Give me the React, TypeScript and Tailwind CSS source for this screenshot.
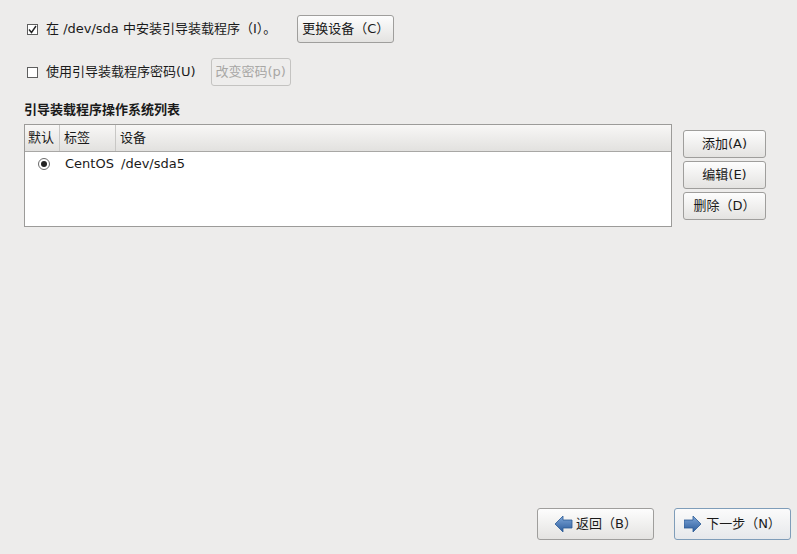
import React from "react";

const font = {
  fontFamily: '"DejaVu Sans", "Noto Sans CJK SC", sans-serif',
};

function GtkButton({
  children,
  className = "",
  disabled = false,
  focused = false,
}: {
  children: React.ReactNode;
  className?: string;
  disabled?: boolean;
  focused?: boolean;
}) {
  return (
    <button
      type="button"
      disabled={disabled}
      className={`flex items-center justify-center rounded-[3px] border text-[13px] ${
        disabled
          ? "border-[#c4c3c1] bg-[#eeedec] text-[#a8a7a5]"
          : focused
          ? "border-[#7f9db9] bg-gradient-to-b from-[#fbfbfb] to-[#e6e8eb] text-[#1a1a1a]"
          : "border-[#9f9e9c] bg-gradient-to-b from-[#fdfdfd] to-[#e4e3e1] text-[#1a1a1a]"
      } ${className}`}
    >
      {children}
    </button>
  );
}

function Check({ checked }: { checked: boolean }) {
  return (
    <span className="flex h-[11px] w-[11px] items-center justify-center border border-[#5e5e5e] bg-white">
      {checked && (
        <svg width="9" height="9" viewBox="0 0 9 9">
          <path d="M1 4.5 L3.5 7.5 L8 1" fill="none" stroke="#222" strokeWidth="1.4" />
        </svg>
      )}
    </span>
  );
}

function Arrow({ dir }: { dir: "left" | "right" }) {
  const id = `g-${dir}`;
  const pts =
    dir === "left"
      ? "1,9 9,1 9,5 18,5 18,13 9,13 9,17"
      : "17,9 9,1 9,5 0,5 0,13 9,13 9,17";
  return (
    <svg width="19" height="18" viewBox="0 0 19 18">
      <defs>
        <linearGradient id={id} x1="0" y1="0" x2="0" y2="1">
          <stop offset="0" stopColor="#7fa7d9" />
          <stop offset="1" stopColor="#2c5c9c" />
        </linearGradient>
      </defs>
      <polygon points={pts} fill={`url(#${id})`} stroke="#2b5a96" strokeWidth="0.8" />
    </svg>
  );
}

export default function App() {
  return (
    <div
      style={font}
      className="flex h-[554px] w-[797px] flex-col bg-[#edeceb] text-[13px] text-[#1a1a1a]"
    >
      <div className="mt-[15px] flex h-[28px] items-center pl-[27px]">
        <Check checked />
        <span className="ml-[8px]">在 /dev/sda 中安装引导装载程序（I）。</span>
        <GtkButton className="ml-[21px] h-[28px] w-[97px]">更换设备（C）</GtkButton>
      </div>

      <div className="mt-[15px] flex h-[28px] items-center pl-[27px]">
        <Check checked={false} />
        <span className="ml-[8px]">使用引导装载程序密码(U)</span>
        <GtkButton disabled className="ml-[15px] h-[28px] w-[80px]">
          改变密码(p)
        </GtkButton>
      </div>

      <div className="ml-[24px] mt-[15px] text-[13px] font-bold leading-[18px]">
        引导装载程序操作系统列表
      </div>

      <div className="mt-[5px] flex">
        <div className="ml-[24px] h-[103px] w-[648px] border border-[#9c9b99] bg-white">
          <div className="flex h-[27px] items-center border-b border-[#a8a7a5] bg-gradient-to-b from-[#f8f7f6] to-[#e2e1df]">
            <div className="flex h-full w-[35px] items-center border-r border-[#c8c7c5] pl-[3px]">
              默认
            </div>
            <div className="flex h-full w-[56px] items-center border-r border-[#c8c7c5] pl-[4px]">
              标签
            </div>
            <div className="flex h-full items-center pl-[4px]">设备</div>
          </div>
          <div className="flex h-[24px] items-center">
            <div className="flex w-[35px] justify-center pl-[2px]">
              <span className="flex h-[12px] w-[12px] items-center justify-center rounded-full border border-[#6a6a6a] bg-white">
                <span className="h-[6px] w-[6px] rounded-full bg-[#222]" />
              </span>
            </div>
            <div className="w-[56px] pl-[5px]">CentOS</div>
            <div className="pl-[5px]">/dev/sda5</div>
          </div>
        </div>

        <div className="ml-[11px] mt-[6px] flex flex-col gap-[3px]">
          <GtkButton className="h-[28px] w-[83px]">添加(A)</GtkButton>
          <GtkButton className="h-[28px] w-[83px]">编辑(E)</GtkButton>
          <GtkButton className="h-[28px] w-[83px]">删除（D）</GtkButton>
        </div>
      </div>

      <div className="mt-auto mb-[14px] flex justify-end gap-[20px] pr-[6px]">
        <GtkButton className="h-[32px] w-[117px] gap-[3px]">
          <Arrow dir="left" />
          <span>返回（B）</span>
        </GtkButton>
        <GtkButton focused className="h-[32px] w-[117px] gap-[3px]">
          <Arrow dir="right" />
          <span>下一步（N）</span>
        </GtkButton>
      </div>
    </div>
  );
}
